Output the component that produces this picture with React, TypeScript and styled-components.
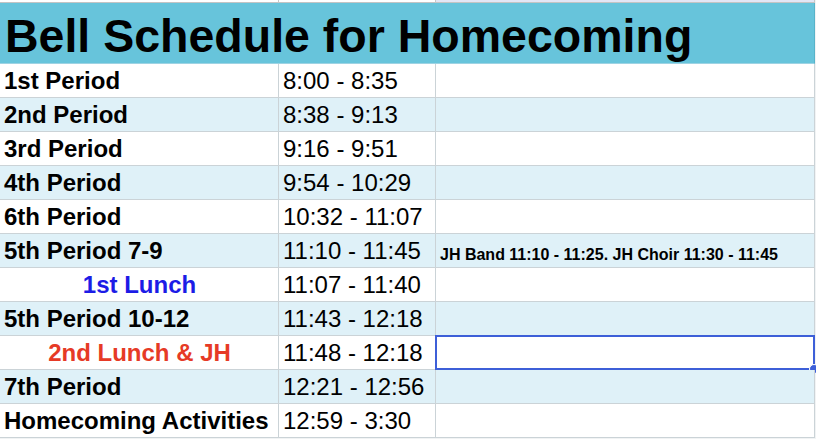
import styled, { createGlobalStyle } from "styled-components";

const GlobalStyle = createGlobalStyle`
  html, body {
    margin: 0;
    padding: 0;
    background: #f1f3f4;
  }
  body {
    font-family: "Liberation Sans", Arial, sans-serif;
  }
`;

type Tone = "black" | "blue" | "red";

const rows: { label: string; time: string; note?: string; tone?: Tone }[] = [
  { label: "1st Period", time: "8:00 - 8:35" },
  { label: "2nd Period", time: "8:38 - 9:13" },
  { label: "3rd Period", time: "9:16 - 9:51" },
  { label: "4th Period", time: "9:54 - 10:29" },
  { label: "6th Period", time: "10:32 - 11:07" },
  { label: "5th Period 7-9", time: "11:10 - 11:45", note: "JH Band 11:10 - 11:25. JH Choir 11:30 - 11:45" },
  { label: "1st Lunch", time: "11:07 - 11:40", tone: "blue" },
  { label: "5th Period 10-12", time: "11:43 - 12:18" },
  { label: "2nd Lunch & JH", time: "11:48 - 12:18", tone: "red" },
  { label: "7th Period", time: "12:21 - 12:56" },
  { label: "Homecoming Activities", time: "12:59 - 3:30" },
];

const toneColor: Record<Tone, string> = {
  black: "#000000",
  blue: "#1c1ce6",
  red: "#e63a26",
};

const Sheet = styled.div`
  display: grid;
  grid-template-columns: 279px 157px 379px;
  width: 815px;
  background: #ffffff;
  border-right: 1px solid #f1f3f4;
`;

const Strip = styled.div<{ $shade?: boolean }>`
  height: 2px;
  background: ${(p) => (p.$shade ? "#e3e6f5" : "#ffffff")};
  border-right: 1px solid #c7c7c7;
  border-bottom: 1px solid #c4c4c4;
`;

const Title = styled.div`
  grid-column: 1 / -1;
  height: 60px;
  box-sizing: content-box;
  display: flex;
  align-items: flex-end;
  padding: 0 4px 0 5px;
  background: #67c4db;
  border-bottom: 1px solid #9ed3e3;
  border-right: 1px solid #58b3c9;
  font-size: 46.5px;
  font-weight: 700;
  line-height: 53px;
  color: #000000;
  white-space: nowrap;
  overflow: hidden;
`;

const Cell = styled.div<{ $alt: boolean; $center?: boolean; $bold?: boolean; $small?: boolean; $tone?: Tone }>`
  position: relative;
  display: flex;
  align-items: flex-end;
  justify-content: ${(p) => (p.$center ? "center" : "flex-start")};
  padding: 0 3px 3px 4px;
  box-sizing: border-box;
  height: 34px;
  background: ${(p) => (p.$alt ? "#dff1f8" : "#ffffff")};
  border-right: 1px solid #cbd3d7;
  border-bottom: 1px solid #cbd3d7;
  font-size: ${(p) => (p.$small ? "16px" : "24px")};
  line-height: ${(p) => (p.$small ? "18px" : "27px")};
  font-weight: ${(p) => (p.$bold ? 700 : 400)};
  color: ${(p) => toneColor[p.$tone ?? "black"]};
  white-space: nowrap;
`;

const Selection = styled.div`
  position: absolute;
  inset: -1px -1px -1px -1px;
  border: 2px solid #3d5fd8;
  pointer-events: none;
`;

const Handle = styled.span`
  position: absolute;
  right: -6px;
  bottom: -6px;
  width: 8px;
  height: 8px;
  border-radius: 50%;
  background: #3d5fd8;
  border: 1px solid #ffffff;
`;

export default function App() {
  return (
    <>
      <GlobalStyle />
      <Sheet>
        <Strip />
        <Strip />
        <Strip $shade />
        <Title>Bell Schedule for Homecoming</Title>
        {rows.map((r, i) => {
          const alt = i % 2 === 1;
          const tone = r.tone ?? "black";
          return [
            <Cell key={`a${i}`} $alt={alt} $bold $tone={tone} $center={tone !== "black"}>
              {r.label}
            </Cell>,
            <Cell key={`b${i}`} $alt={alt}>
              {r.time}
            </Cell>,
            <Cell key={`c${i}`} $alt={alt} $bold $small>
              {r.note}
              {tone === "red" && (
                <Selection>
                  <Handle />
                </Selection>
              )}
            </Cell>,
          ];
        })}
      </Sheet>
    </>
  );
}
